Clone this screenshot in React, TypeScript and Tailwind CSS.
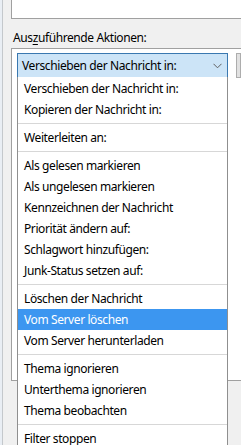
const items: (string | null)[] = [
  'Verschieben der Nachricht in:',
  'Kopieren der Nachricht in:',
  null,
  'Weiterleiten an:',
  null,
  'Als gelesen markieren',
  'Als ungelesen markieren',
  'Kennzeichnen der Nachricht',
  'Priorität ändern auf:',
  'Schlagwort hinzufügen:',
  'Junk-Status setzen auf:',
  null,
  'Löschen der Nachricht',
  'Vom Server löschen',
  'Vom Server herunterladen',
  null,
  'Thema ignorieren',
  'Unterthema ignorieren',
  'Thema beobachten',
  null,
  'Filter stoppen',
];

const selected = 'Vom Server löschen';

export default function App() {
  return (
    <div
      className="relative w-[241px] h-[445px] overflow-hidden bg-[#f0f0f0] text-[12px] tracking-[-0.4px] text-black flex"
      style={{ fontFamily: '"Noto Sans", "Open Sans", sans-serif' }}
    >
      <div className="w-[3px] shrink-0 bg-[#e9eef4] border-r border-[#c4c8cc]" />
      <div className="flex-1 flex flex-col">
        <div className="ml-[8px] h-[19px] bg-white border-l border-b border-[#a0a0a0]" />
        <div className="ml-[10px] mt-[10px] h-[17px] leading-[17px]">
          Aus<span className="underline underline-offset-2">z</span>uführende Aktionen:
        </div>
        <div className="ml-[8px] mt-[2px] h-[333px] bg-white border-l border-t border-b border-[#a0a0a0] pl-[5px] pt-[4px] flex items-start gap-[8px]">
          <div className="w-[211px] h-[25px] shrink-0 bg-[#cce4f7] border border-[#3a78b0] flex items-center justify-between pl-[4px] pr-[5px]">
            <span className="leading-none">Verschieben der Nachricht in:</span>
            <svg width="9" height="6" viewBox="0 0 9 6" className="text-[#606060]">
              <path d="M0.5 0.8 L4.5 4.8 L8.5 0.8" fill="none" stroke="currentColor" strokeWidth="1" />
            </svg>
          </div>
          <div className="h-[25px] flex-1 bg-[#e1e1e1] border border-[#adadad]" />
        </div>
      </div>

      <div className="absolute left-[17px] top-[77px] w-[211px] bg-white border-l border-r border-[#8f8f8f] pt-[1px] flex flex-col">
        {items.map((it, i) =>
          it === null ? (
            <div key={i} className="h-[7px] flex items-center">
              <div className="h-px w-full bg-[#d7d7d7]" />
            </div>
          ) : (
            <div
              key={i}
              className={`h-[21px] leading-[21px] pl-[6px] whitespace-nowrap ${
                it === selected ? 'bg-[#3c96f0] text-white' : ''
              }`}
            >
              {it}
            </div>
          )
        )}
      </div>
    </div>
  );
}
